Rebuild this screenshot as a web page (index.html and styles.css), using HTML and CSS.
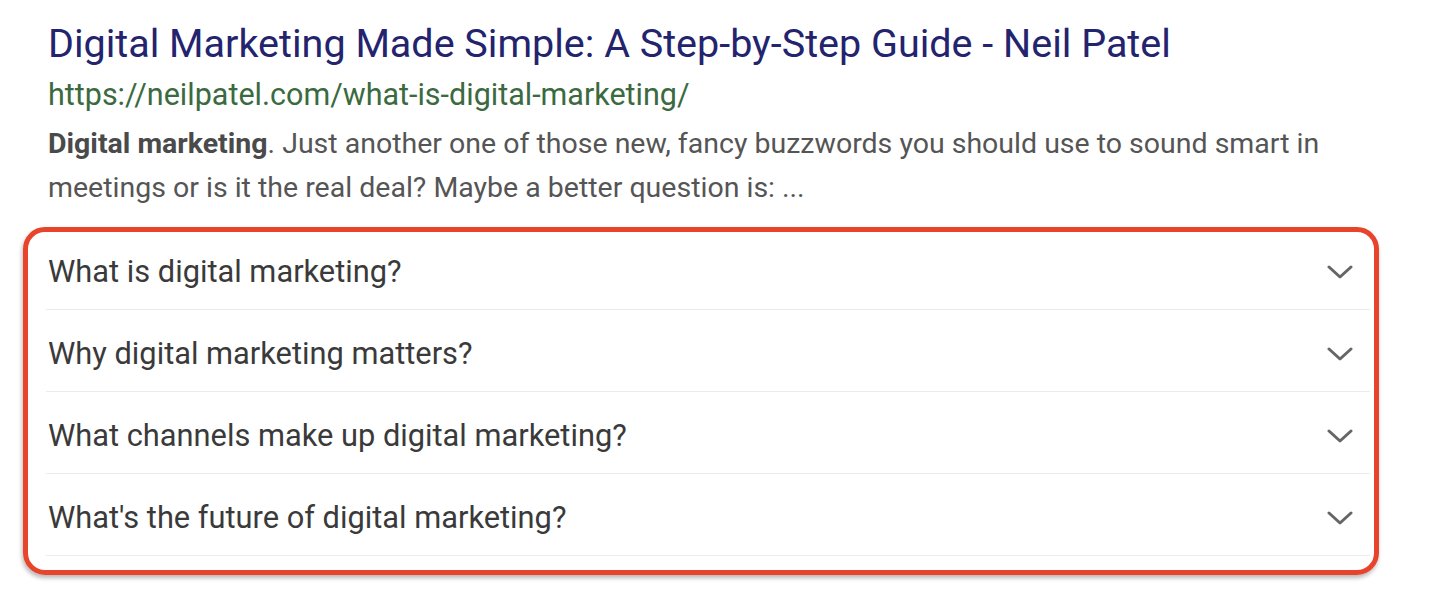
FILE: index.html
```html
<!DOCTYPE html>
<html lang="en">
<head>
<meta charset="utf-8">
<title>Digital Marketing Made Simple</title>
<link rel="stylesheet" href="styles.css">
</head>
<body>
<div class="result">
  <div class="result-head">
    <a class="result-title" href="#">Digital Marketing Made Simple: A Step-by-Step Guide - Neil Patel</a>
    <div class="result-url">https://neilpatel.com/what-is-digital-marketing/</div>
    <p class="result-desc"><b>Digital marketing</b>. Just another one of those new, fancy buzzwords you should use to sound smart in meetings or is it the real deal? Maybe a better question is: ...</p>
  </div>
  <div class="faq-box">
    <ul class="faq-list">
      <li class="faq-row"><span class="faq-q">What is digital marketing?</span><svg class="chev" viewBox="0 0 26 14" width="26" height="14"><polyline points="2,2 13,12 24,2"/></svg></li>
      <li class="faq-row"><span class="faq-q">Why digital marketing matters?</span><svg class="chev" viewBox="0 0 26 14" width="26" height="14"><polyline points="2,2 13,12 24,2"/></svg></li>
      <li class="faq-row"><span class="faq-q">What channels make up digital marketing?</span><svg class="chev" viewBox="0 0 26 14" width="26" height="14"><polyline points="2,2 13,12 24,2"/></svg></li>
      <li class="faq-row"><span class="faq-q">What's the future of digital marketing?</span><svg class="chev" viewBox="0 0 26 14" width="26" height="14"><polyline points="2,2 13,12 24,2"/></svg></li>
    </ul>
  </div>
</div>
</body>
</html>
```

FILE: styles.css
```css
html, body {
  margin: 0;
  padding: 0;
  background: #ffffff;
}
body {
  font-family: Roboto, "Liberation Sans", Arial, sans-serif;
}
.result {
  width: 1437px;
  height: 600px;
  overflow: hidden;
}
.result-head {
  padding: 20px 0 0 48px;
}
.result-title {
  display: block;
  font-size: 39.5px;
  line-height: 48px;
  color: #23236e;
  text-decoration: none;
  white-space: nowrap;
}
.result-url {
  margin-top: 7px;
  font-size: 30.5px;
  line-height: 40px;
  color: #3b6a40;
  white-space: nowrap;
}
.result-desc {
  margin: 7px 0 0 0;
  width: 1340px;
  font-size: 28.5px;
  line-height: 44px;
  color: #555555;
}
.result-desc b {
  color: #4a4a4a;
  font-weight: 700;
}
.faq-box {
  margin: 17px 0 0 23px;
  width: 1356px;
  height: 348px;
  box-sizing: border-box;
  border: 5px solid #e8432b;
  border-radius: 22px;
  box-shadow: -1px 3px 4px rgba(0, 0, 0, 0.28);
  padding: 0 4px 0 18px;
}
.faq-list {
  list-style: none;
  margin: -4px 0 0 0;
  padding: 0;
}
.faq-row {
  height: 82px;
  box-sizing: border-box;
  padding: 6px 17px 0 2px;
  border-bottom: 1px solid #ececec;
  display: flex;
  align-items: center;
  justify-content: space-between;
}
.faq-q {
  font-size: 30.8px;
  line-height: 36px;
  color: #3a3a3a;
}
.chev {
  display: block;
}
.chev polyline {
  fill: none;
  stroke: #666666;
  stroke-width: 3;
  stroke-linecap: round;
  stroke-linejoin: round;
}
```
